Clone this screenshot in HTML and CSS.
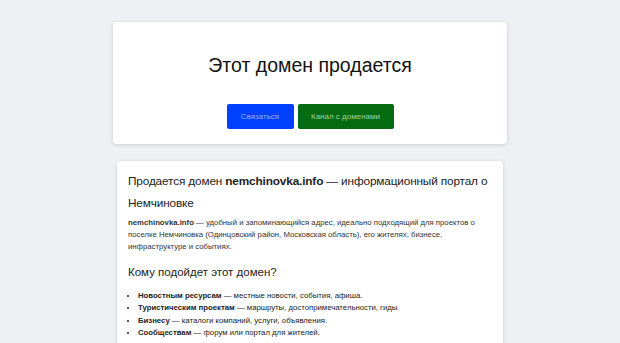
FILE: index.html
```html
<!DOCTYPE html>
<html lang="ru">
<head>
    <meta charset="UTF-8">
    <meta name="viewport" content="width=device-width, initial-scale=1.0">
    <title>Этот домен продается</title>
    <link rel="stylesheet" href="styles.css">
</head>
<body>

<div class="hero">
    <h1>Этот домен продается</h1>
    <div class="buttons">
        <a class="btn btn-blue" href="#">Связаться</a>
        <a class="btn btn-green" href="#">Канал с доменами</a>
    </div>
</div>

<div class="content">
    <h2>Продается домен <b>nemchinovka.info</b> — информационный портал о Немчиновке</h2>
    <p><b>nemchinovka.info</b> — удобный и запоминающийся адрес, идеально подходящий для проектов о поселке Немчиновка (Одинцовский район, Московская область), его жителях, бизнесе, инфраструктуре и событиях.</p>

    <h3>Кому подойдет этот домен?</h3>
    <ul>
        <li><b>Новостным ресурсам</b> — местные новости, события, афиша.</li>
        <li><b>Туристическим проектам</b> — маршруты, достопримечательности, гиды.</li>
        <li><b>Бизнесу</b> — каталоги компаний, услуги, объявления.</li>
        <li><b>Сообществам</b> — форум или портал для жителей.</li>
    </ul>
</div>

</body>
</html>
```

FILE: styles.css
```css
body {
    background-color: #eef0f3;
    font-family: 'Liberation Sans', Arial, sans-serif;
    margin: 0;
    padding: 22px 0 0;
    color: #222;
}
.hero {
    width: 394px;
    margin: 0 auto;
    box-sizing: border-box;
    background-color: #fff;
    border-radius: 4px;
    box-shadow: 0 1px 4px rgba(0, 0, 0, 0.15);
    text-align: center;
    padding: 29px 20px 15px;
    height: 122px;
}
h1 {
    font-size: 19.5px;
    font-weight: normal;
    color: #111;
    margin: 0 0 25px;
    line-height: 28px;
}
.buttons {
    display: flex;
    justify-content: center;
    gap: 4px;
}
.btn {
    display: inline-block;
    height: 25px;
    line-height: 25px;
    font-size: 8px;
    text-decoration: none;
    border-radius: 2px;
    box-sizing: border-box;
}
.btn-blue {
    background-color: #0040ff;
    color: #8fb0ff;
    width: 67px;
}
.btn-green {
    background-color: #056b10;
    color: #9fd6a4;
    width: 96px;
}
.content {
    width: 386px;
    margin: 17px auto 0;
    box-sizing: border-box;
    background-color: #fff;
    border-radius: 4px;
    box-shadow: 0 1px 4px rgba(0, 0, 0, 0.15);
    padding: 9px 8px 10px 11px;
}
h2 {
    font-size: 11.8px;
    font-weight: normal;
    line-height: 22px;
    letter-spacing: -0.15px;
    margin: 0 0 3px;
    color: #222;
}
p {
    font-size: 7.75px;
    line-height: 12px;
    margin: 0 0 10px;
    color: #333;
}
h3 {
    font-size: 11.5px;
    font-weight: normal;
    line-height: 18px;
    margin: 0 0 9px;
}
ul {
    font-size: 7.75px;
    line-height: 12.3px;
    margin: 0;
    padding-left: 10px;
}
```
